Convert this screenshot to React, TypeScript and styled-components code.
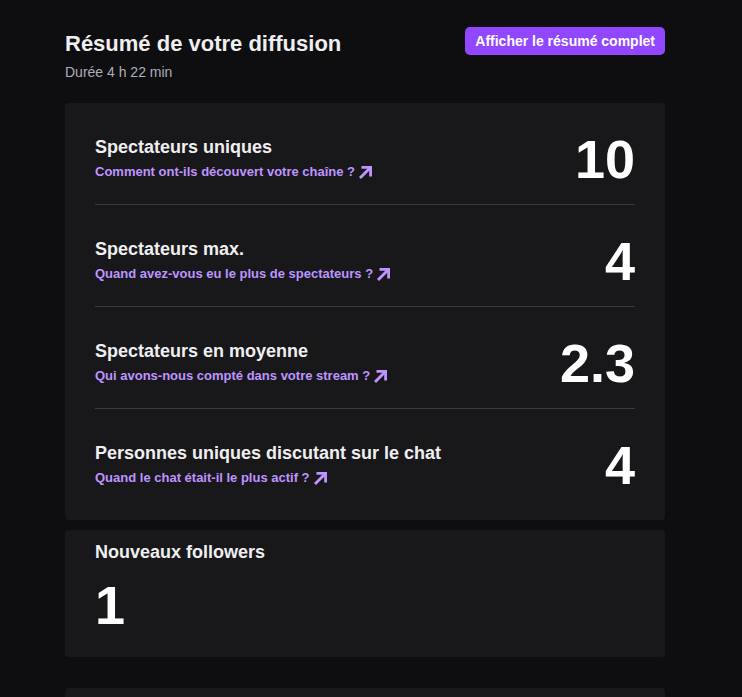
import { createGlobalStyle, styled } from "styled-components"

const GlobalStyle = createGlobalStyle`
  html, body {
    margin: 0;
    padding: 0;
    background: #0e0e10;
    font-family: "Liberation Sans", Arial, sans-serif;
    color: #efeff1;
  }
  * { box-sizing: border-box; }
`

const stats = [
  { title: "Spectateurs uniques", link: "Comment ont-ils découvert votre chaîne ?", value: "10" },
  { title: "Spectateurs max.", link: "Quand avez-vous eu le plus de spectateurs ?", value: "4" },
  { title: "Spectateurs en moyenne", link: "Qui avons-nous compté dans votre stream ?", value: "2.3" },
  { title: "Personnes uniques discutant sur le chat", link: "Quand le chat était-il le plus actif ?", value: "4" },
]

const ArrowIcon = () => (
  <svg width="15" height="15" viewBox="0 0 15 15" fill="none">
    <path d="M2 13L12 3" stroke="currentColor" strokeWidth="2.8" />
    <path d="M3.5 2.4H12.6V11.5" stroke="currentColor" strokeWidth="2.8" />
  </svg>
)

const App = () => {
  return (
    <>
      <GlobalStyle />
      <Page>
        <Header>
          <div>
            <Title>Résumé de votre diffusion</Title>
            <Subtitle>Durée 4 h 22 min</Subtitle>
          </div>
          <PrimaryButton>Afficher le résumé complet</PrimaryButton>
        </Header>

        <StatsCard>
          {stats.map((s, i) => (
            <StatRow key={s.title} $last={i === stats.length - 1}>
              <StatText>
                <StatTitle>{s.title}</StatTitle>
                <StatLink href="#">
                  {s.link}
                  <ArrowIcon />
                </StatLink>
              </StatText>
              <BigNumber>{s.value}</BigNumber>
            </StatRow>
          ))}
        </StatsCard>

        <FollowCard>
          <StatTitle>Nouveaux followers</StatTitle>
          <FollowCount>1</FollowCount>
        </FollowCard>

        <NextCard />
      </Page>
    </>
  )
}

const Page = styled.div`
  width: 600px;
  margin-left: 65px;
  padding-top: 27px;
  display: flex;
  flex-direction: column;
`

const Header = styled.div`
  display: flex;
  justify-content: space-between;
  align-items: flex-start;
  margin-bottom: 22px;
`

const Title = styled.h1`
  margin: 3px 0 0;
  font-size: 22px;
  line-height: 28px;
  font-weight: 700;
  color: #efeff1;
`

const Subtitle = styled.p`
  margin: 5px 0 0;
  font-size: 14px;
  line-height: 18px;
  color: #adadb8;
`

const PrimaryButton = styled.button`
  height: 28px;
  padding: 0 10px;
  border: none;
  border-radius: 5px;
  background: #9147ff;
  color: #ffffff;
  font-family: "Liberation Sans", Arial, sans-serif;
  font-size: 14px;
  font-weight: 700;
  cursor: pointer;
`

const StatsCard = styled.div`
  background: #18181b;
  border-radius: 4px;
  padding: 0 30px 10px;
`

const StatRow = styled.div<{ $last: boolean }>`
  display: flex;
  justify-content: space-between;
  align-items: center;
  padding: 33px 0 23px;
  border-bottom: ${(p) => (p.$last ? "none" : "1px solid #3a3a3d")};
`

const StatText = styled.div`
  display: flex;
  flex-direction: column;
  gap: 5px;
`

const StatTitle = styled.div`
  font-size: 18px;
  line-height: 22px;
  font-weight: 700;
  color: #efeff1;
`

const StatLink = styled.a`
  display: inline-flex;
  align-items: center;
  gap: 3px;
  font-size: 13px;
  line-height: 18px;
  font-weight: 700;
  color: #bf94ff;
  text-decoration: none;
`

const BigNumber = styled.div`
  font-size: 54px;
  line-height: 44px;
  font-weight: 700;
  color: #ffffff;
`

const FollowCount = styled(BigNumber)`
  line-height: 54px;
`

const FollowCard = styled.div`
  margin-top: 10px;
  background: #18181b;
  border-radius: 4px;
  padding: 11px 30px 25px;
  display: flex;
  flex-direction: column;
  gap: 15px;
`

const NextCard = styled.div`
  margin-top: 31px;
  height: 120px;
  background: #18181b;
  border-radius: 4px;
`

export default App
